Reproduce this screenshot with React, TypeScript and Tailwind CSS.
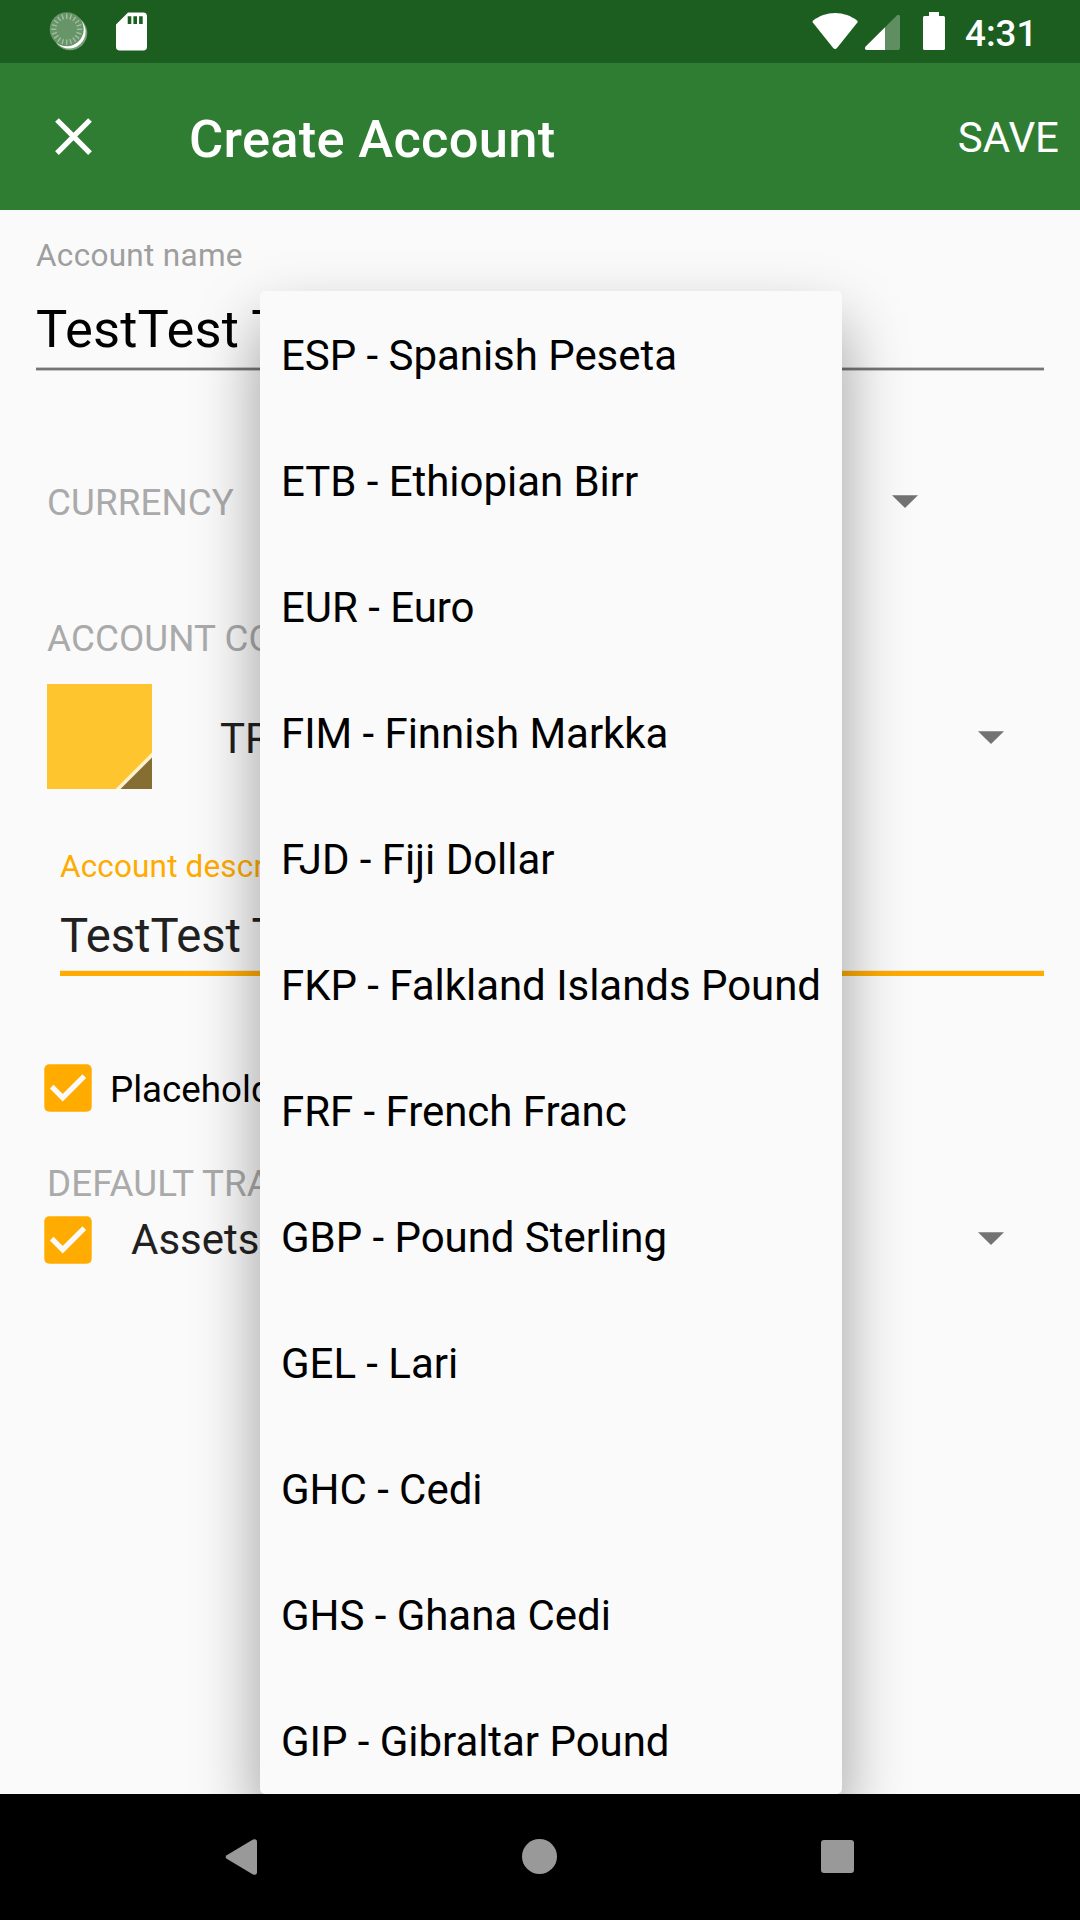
import React from "react";

const CURRENCIES = [
  "ESP - Spanish Peseta",
  "ETB - Ethiopian Birr",
  "EUR - Euro",
  "FIM - Finnish Markka",
  "FJD - Fiji Dollar",
  "FKP - Falkland Islands Pound",
  "FRF - French Franc",
  "GBP - Pound Sterling",
  "GEL - Lari",
  "GHC - Cedi",
  "GHS - Ghana Cedi",
  "GIP - Gibraltar Pound",
];

const TICKS = Array.from({ length: 20 }, (_, i) => i * 18);

function SyncIcon() {
  return (
    <svg className="ml-12 h-[63px] w-[42px]" viewBox="48 0 42 63">
      <circle cx="70" cy="33" r="17.3" fill="#fff" fillOpacity="0.4" />
      <circle cx="69" cy="31.8" r="16.600" fill="#fff" />
      <circle cx="66.7" cy="29.3" r="17" fill="#689568" />
      {TICKS.map((angle) => (
        <path
          key={angle}
          d="M66.7 13.8v5.2"
          stroke="#a5bfa5"
          strokeWidth="1.3"
          transform={`rotate(${angle} 66.7 29.3)`}
        />
      ))}
    </svg>
  );
}

function SdCardIcon() {
  return (
    <svg className="ml-[26px] h-[63px] w-8" viewBox="116 0 32 63">
      <path
        fill="#fff"
        fillRule="evenodd"
        d="M128 12.5h15.2a3.8 3.8 0 0 1 3.8 3.8v30.4a3.8 3.8 0 0 1-3.8 3.8h-23.4a3.8 3.8 0 0 1-3.8-3.8V24.4zM127.7 16.2v7.8h3.6v-7.8zM133.4 16.2v7.8h3.6v-7.8zM139.1 16.2v7.8h3.6v-7.8z"
      />
    </svg>
  );
}

function StatusBar() {
  return (
    <div className="flex h-[63px] shrink-0 items-center bg-[#1b5e20]">
      <SyncIcon />
      <SdCardIcon />
      <svg className="ml-auto h-[63px] w-[135px]" viewBox="812 0 135 63">
        <path fill="#fff" d="M812.8 22.6Q812 21.4 813.2 20.4C819 16 827 13 835.1 13s16.1 3 21.9 7.4q1.200 1 .4 2.200L837 48q-1.900 1.900-3.800 0z" />
        <path fill="#fff" fillOpacity="0.3" d="M885 27.200L896.800 15.400Q900 13.800 900 17v31q0 2-2 2h-13z" />
        <path fill="#fff" d="M885 27.200V50h-18.500q-2.500-.4-1.100-3.200z" />
        <path fill="#fff" d="M929 12h10v4h4.500q1.500 0 1.500 1.500v31q0 1.500-1.500 1.500h-19q-1.500 0-1.500-1.500v-31q0-1.500 1.500-1.500h4.500z" />
      </svg>
      <span className="ml-[18px] mt-1 w-[115px] text-[36.75px] leading-[43px] font-medium text-white">4:31</span>
    </div>
  );
}

function Toolbar() {
  return (
    <header className="flex h-[147px] shrink-0 items-center bg-[#2e7d32] pr-[21px] pl-[42px] text-white">
      <svg className="size-[63px]" viewBox="0 0 24 24" fill="#fff">
        <path d="M19 6.410L17.590 5 12 10.590 6.410 5 5 6.410 10.590 12 5 17.590 6.410 19 12 13.410 17.590 19 19 17.590 13.410 12z" />
      </svg>
      <h1 className="mt-[4px] ml-[84px] text-[52.5px] leading-[62px] font-medium tracking-[0.27px]">Create Account</h1>
      <button className="mt-[2px] ml-auto text-[42px] leading-[50px]">SAVE</button>
    </header>
  );
}

function Arrow({ className }: { className: string }) {
  return (
    <svg className={`h-[13px] w-[26px] shrink-0 ${className}`} viewBox="0 0 26 13">
      <path d="M0 0.300h26L13 13z" fill="#737373" />
    </svg>
  );
}

function Checkbox() {
  return (
    <svg className="size-12 shrink-0" viewBox="0 0 48 48">
      <rect x="0.300" y="0.300" width="47.400" height="47.400" rx="5" fill="#ffab00" />
      <path d="M7.700 22.700L18.700 33.700L40.300 12.100" fill="none" stroke="#fafafa" strokeWidth="5.200" />
    </svg>
  );
}

function SectionLabel({ children }: { children: React.ReactNode }) {
  return <div className="text-[36.75px] leading-[43px] tracking-[0.1px] whitespace-nowrap text-[#aaaaaa]">{children}</div>;
}

function AccountForm() {
  return (
    <form className="flex flex-col pt-[27px]">
      <section className="mx-9 flex flex-col">
        <label className="text-[31.5px] leading-[38px] tracking-[0.3px] text-[#9e9e9e]">Account name</label>
        <div className="mt-[23px] h-[69px] text-[52.5px] leading-[62px] tracking-[0.15px] text-black">TestTest Test</div>
        <div className="h-1 border-y border-[#c4c4c4] bg-[#757575]" />
      </section>

      <section className="mt-[110px] flex items-center pr-[162px] pl-[47px]">
        <SectionLabel>CURRENCY</SectionLabel>
        <Arrow className="mb-[2px] ml-auto" />
      </section>

      <section className="mt-[93px] flex flex-col pr-[76px] pl-[47px]">
        <SectionLabel>ACCOUNT COLOR &amp; TYPE</SectionLabel>
        <div className="mt-6 flex items-center">
          <svg className="size-[105px]" viewBox="0 0 105 105">
            <path fill="#ffc52e" d="M0 0h105v105H0z" />
            <path fill="#fff3cf" d="M105 68.500V105H68.500z" />
            <path fill="#866d31" d="M105 73.500V105H73.500z" />
          </svg>
          <span className="mt-[5px] ml-[68px] text-[42px] leading-[50px] text-[#212121]">TRADING</span>
          <Arrow className="mt-[2px] ml-auto" />
        </div>
      </section>

      <section className="mt-[59px] mr-9 ml-[60px] flex flex-col">
        <label className="text-[31.5px] leading-[38px] tracking-[0.15px] text-[#ffab00]">Account description</label>
        <div className="mt-[22px] h-[62px] text-[47.25px] leading-[56px] tracking-[-0.1px] text-[#212121]">TestTest Test</div>
        <div className="h-1.5 border-t border-[#f1ead8] bg-[#ffab00]" />
      </section>

      <section className="mt-[88px] flex items-center pl-11">
        <Checkbox />
        <span className="mt-[2px] ml-[18px] text-[36.75px] leading-[43px] text-black">Placeholder account</span>
      </section>

      <section className="mt-[50px] pl-[47px]">
        <SectionLabel>DEFAULT TRANSFER ACCOUNT</SectionLabel>
      </section>
      <section className="mt-[10px] flex items-center pr-[76px] pl-11">
        <Checkbox />
        <span className="ml-[39px] text-[42px] leading-[50px] text-[#212121]">Assets</span>
        <Arrow className="mb-1 ml-auto" />
      </section>
    </form>
  );
}

function CurrencyMenu() {
  return (
    <ul className="absolute top-[81px] left-[260px] h-[1503px] w-[582px] overflow-hidden rounded-[5px] bg-[#fafafa] pt-[2px] shadow-[0_32px_64px_rgba(0,0,0,0.38)]">
      {CURRENCIES.map((name) => (
        <li key={name} className="flex h-[126px] items-center pl-[21px] text-[42px] leading-[50px] tracking-[-0.04px] whitespace-nowrap text-black">
          {name}
        </li>
      ))}
    </ul>
  );
}

function NavigationBar() {
  return (
    <nav className="flex h-[126px] shrink-0 items-center bg-black px-[225px]">
      <svg className="h-9 w-8" viewBox="0 0 32 36">
        <path fill="#999" d="M1.700 16.200L28 .6q4-1.300 4 2.400v30q0 3.700-4 2.400L1.700 19.800Q-.4 18 1.700 16.200z" />
      </svg>
      <div className="mb-px ml-[265px] size-[35px] rounded-full bg-[#999999]" />
      <div className="mb-px ml-[264px] size-[33px] rounded-[3px] bg-[#999999]" />
    </nav>
  );
}

export default function App() {
  return (
    <div className="flex h-[1920px] w-[1080px] flex-col overflow-hidden bg-[#fafafa] font-[Roboto,sans-serif]">
      <StatusBar />
      <Toolbar />
      <main className="relative h-[1584px] shrink-0 overflow-hidden">
        <AccountForm />
        <CurrencyMenu />
      </main>
      <NavigationBar />
    </div>
  );
}
